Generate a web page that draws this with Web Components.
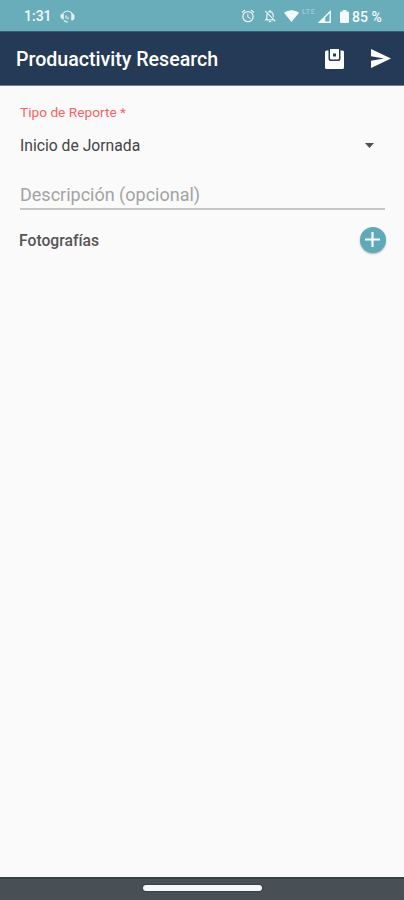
<!DOCTYPE html>
<html lang="es">
<head>
<meta charset="utf-8">
<meta name="viewport" content="width=device-width, initial-scale=1">
<title>Produactivity Research</title>
<style>
  html, body {
    margin: 0;
    height: 100%;
  }
  body {
    font-family: Roboto, "Liberation Sans", sans-serif;
    background: #fafafa;
    overflow: hidden;
  }
</style>
</head>
<body>
<report-screen>
  <status-bar slot="top" time="1:31" battery="85 %"></status-bar>
  <app-bar slot="top">Produactivity Research</app-bar>
  <select-field label="Tipo de Reporte *">Inicio de Jornada</select-field>
  <text-field>Descripción (opcional)</text-field>
  <photo-section>Fotografías</photo-section>
  <nav-bar slot="bottom"></nav-bar>
</report-screen>

<script>
class BaseElement extends HTMLElement {
  constructor() {
    super();
    this.attachShadow({ mode: 'open' });
  }

  connectedCallback() {
    this.shadowRoot.innerHTML = this.render();
  }
}

class ReportScreen extends BaseElement {
  render() {
    return `
      <style>
        :host {
          display: flex;
          flex-direction: column;
          height: 100vh;
        }
        main {
          flex: 1;
          padding: 17px 18px 0 20px;
          background: #fafafa;
        }
      </style>
      <slot name="top"></slot>
      <main><slot></slot></main>
      <slot name="bottom"></slot>
    `;
  }
}

class StatusBar extends BaseElement {
  render() {
    return `
      <style>
        :host {
          display: flex;
          align-items: center;
          box-sizing: border-box;
          height: 31px;
          padding: 1px 21px 0 24px;
          background: #69adbb;
          color: #f4fafb;
          font-size: 14px;
          font-weight: 500;
          line-height: 16px;
        }
        .time {
          width: 36px;
        }
        .icons {
          display: flex;
          align-items: center;
          margin-left: auto;
        }
        svg {
          display: block;
          fill: currentColor;
        }
        .bell { margin-left: 8px; }
        .wifi { margin-left: 7px; }
        .lte {
          align-self: flex-start;
          width: 16px;
          margin-left: 3px;
          font-size: 7px;
          line-height: 8px;
          letter-spacing: 0.8px;
          opacity: 0.38;
        }
        .signal { margin-left: 0; }
        .battery { margin-left: 9px; }
        .percent {
          width: 31px;
          margin-left: 3px;
          padding-top: 1px;
          white-space: nowrap;
        }
      </style>
      <span class="time">${this.getAttribute('time')}</span>
      <svg width="15" height="13" viewBox="0 0 15 13" opacity=".88">
        <path d="M3 3.500A5.300 5.300 0 0 1 12 3.500M4 10.500A5 5 0 0 0 8 12" fill="none" stroke="currentColor" stroke-width="1.200"/>
        <path d="M1.500 3.800h2.300v5.700H2.400L.5 7.500V5zM11.200 3.200h1.700l1.600 2v3.400l-1.600 1.800h-1.700z"/>
        <path d="M6 5.500v3M8 7v2.500" stroke="currentColor" stroke-width="1.200"/>
      </svg>
      <div class="icons">
        <svg width="14" height="14" viewBox="1 1 22 22" opacity=".9">
          <path d="M22 5.72l-4.6-3.86-1.29 1.53 4.6 3.86L22 5.72zM7.88 3.39L6.6 1.86 2 5.71l1.29 1.53 4.59-3.85zM12.5 8H11v6l4.75 2.85.75-1.23-4-2.37V8zM12 4a9 9 0 1 0 0 18 9 9 0 0 0 0-18zm0 16a7 7 0 1 1 0-14 7 7 0 0 1 0 14z"/>
        </svg>
        <svg class="bell" width="14" height="14" viewBox="2 1 20 22" opacity=".9">
          <path d="M20 18.69L7.84 6.14 5.27 3.49 4 4.76l2.8 2.8v.01c-.52.99-.8 2.16-.8 3.42v5l-2 2v1h13.73l2 2L21 19.72l-1-1.03zM12 22c1.11 0 2-.89 2-2h-4c0 1.11.89 2 2 2zM8 11c0-.7.1-1.35.3-1.92L16.200 17H8zM18 14.68V11c0-3.08-1.64-5.640-4.500-6.320V4a1.500 1.500 0 0 0-3 0v.68c-.7.15-1.320.430-1.860.8l1.500 1.500C10.700 6.700 11.300 6.500 12 6.500c2.500 0 4 2 4 4.500v1.680z"/>
        </svg>
        <svg class="wifi" width="15" height="12" viewBox="0 0 15 12">
          <path d="M0 2.700C4.200-.7 10.800-.7 15 2.700L7.500 12z"/>
        </svg>
        <span class="lte">LTE</span>
        <svg class="signal" width="13" height="13" viewBox="0 0 13 13">
          <path d="M12.200 1.600v10.700H1.500z" fill="none" stroke="currentColor" stroke-width="1.400"/>
          <path d="M1 12.500L7.300 6.200v6.300z"/>
        </svg>
        <svg class="battery" width="9" height="13" viewBox="0 0 9 13">
          <path d="M2.600 0h3.800v1.400h1.400Q9 1.400 9 2.600v9.200Q9 13 7.800 13H1.200Q0 13 0 11.800V2.600Q0 1.400 1.200 1.400h1.400z"/>
        </svg>
        <span class="percent">${this.getAttribute('battery')}</span>
      </div>
    `;
  }
}

class AppBar extends BaseElement {
  render() {
    return `
      <style>
        :host {
          display: flex;
          align-items: center;
          box-sizing: border-box;
          height: 55px;
          padding: 0 13px 0 16px;
          background: #253a57;
          border-top: 1px solid #386079;
          border-bottom: 1px solid #718191;
          color: #fff;
        }
        h1 {
          flex: 1;
          margin: 0;
          padding-top: 2px;
          font-size: 19.6px;
          font-weight: 500;
          line-height: 24px;
          white-space: nowrap;
        }
        svg {
          display: block;
          fill: #fff;
        }
        .save { margin-right: 27px; }
      </style>
      <h1><slot></slot></h1>
      <svg class="save" width="19" height="20" viewBox="0 0 19 20">
        <path d="M1.500 1.500H3.500v8.500Q3.500 12 5.500 12h8Q15.500 12 15.500 10V1.500h2Q19 1.500 19 3v15.500q0 1.500-1.500 1.500h-16Q0 20 0 18.500V3Q0 1.500 1.500 1.500z"/>
        <path fill-rule="evenodd" d="M5 0h9v9q0 1.500-1.500 1.500h-6Q5 10.500 5 9zM8 4.500v3h3v-3z"/>
      </svg>
      <svg width="20" height="19" viewBox="0 0 20 19">
        <path d="M0 0l20 9.500L0 19v-7.200l13-2.300L0 7.200z"/>
      </svg>
    `;
  }
}

class SelectField extends BaseElement {
  render() {
    return `
      <style>
        :host { display: block; }
        label {
          display: block;
          padding-top: 1px;
          font-size: 13.7px;
          line-height: 17px;
          color: #fb6262;
        }
        .value {
          display: flex;
          align-items: center;
          justify-content: space-between;
          height: 20px;
          margin-top: 14px;
          padding-right: 12px;
          font-size: 15.7px;
          color: #444;
        }
        svg { display: block; }
      </style>
      <label>${this.getAttribute('label')}</label>
      <div class="value">
        <span><slot></slot></span>
        <svg width="9" height="5" viewBox="0 0 9 5"><path d="M0 0h9L4.500 5z" fill="#505050"/></svg>
      </div>
    `;
  }
}

class TextField extends BaseElement {
  render() {
    return `
      <style>
        :host {
          display: block;
          box-sizing: border-box;
          height: 35px;
          margin: 20px 1px 0 0;
          padding-top: 9px;
          border-bottom: 2px solid #c6c6c6;
          font-size: 18px;
          line-height: 22px;
          color: #a3a3a3;
        }
      </style>
      <slot></slot>
    `;
  }
}

class PhotoSection extends BaseElement {
  render() {
    return `
      <style>
        :host {
          display: flex;
          align-items: center;
          justify-content: space-between;
          margin: 17px 0 0 -1px;
          font-size: 15.7px;
          font-weight: 500;
          color: #555;
        }
        span { padding-top: 1px; }
        button {
          width: 26px;
          height: 26px;
          padding: 0;
          border: 0;
          border-radius: 50%;
          background: #60a9b8;
          box-shadow: 0 1px 2px rgba(0, 0, 0, 0.3);
        }
        svg { display: block; }
      </style>
      <span><slot></slot></span>
      <button aria-label="Agregar">
        <svg width="26" height="26" viewBox="0 0 26 26"><path d="M12.500 5v15M5 12.500h15" stroke="#fff" stroke-width="2.200"/></svg>
      </button>
    `;
  }
}

class NavBar extends BaseElement {
  render() {
    return `
      <style>
        :host {
          display: flex;
          justify-content: center;
          box-sizing: border-box;
          height: 23px;
          padding: 6px 0 0 1px;
          border-top: 2px solid #344443;
          background: #485056;
        }
        .pill {
          width: 119px;
          height: 6px;
          border-radius: 3px;
          background: #f5f8fa;
          box-shadow: 0 0 1px 1px #3b4247;
        }
      </style>
      <div class="pill"></div>
    `;
  }
}

customElements.define('report-screen', ReportScreen);
customElements.define('status-bar', StatusBar);
customElements.define('app-bar', AppBar);
customElements.define('select-field', SelectField);
customElements.define('text-field', TextField);
customElements.define('photo-section', PhotoSection);
customElements.define('nav-bar', NavBar);
</script>
</body>
</html>
